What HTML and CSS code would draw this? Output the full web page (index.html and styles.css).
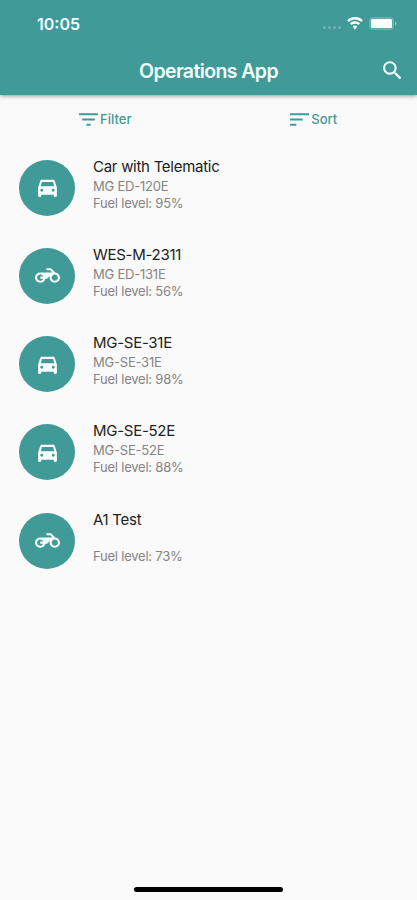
FILE: index.html
```
<!DOCTYPE html>
<html lang="en">
<head>
  <meta charset="UTF-8" />
  <meta name="viewport" content="width=device-width, initial-scale=1.0" />
  <title>Operations App</title>
  <link rel="stylesheet" href="styles.css">
</head>
<body>
  <!-- Icons used by the list -->
  <svg class="sprite">
    <symbol id="car" viewBox="0 0 24 24">
      <path d="M18.92 5.500C18.720 4.900 18.160 4.500 17.500 4.500h-11c-.66 0-1.210.4-1.420 1L3 12v8c0 .55.45 1 1 1h1c.55 0 1-.45 1-1v-1h12v1c0 .55.45 1 1 1h1c.55 0 1-.45 1-1v-8l-2.080-6.500zM6.500 16c-.83 0-1.400-.6-1.400-1.400s.6-1.400 1.400-1.400 1.400.6 1.400 1.400S7.300 16 6.500 16zm11 0c-.83 0-1.400-.6-1.400-1.400s.6-1.400 1.400-1.400 1.400.6 1.400 1.400-.6 1.400-1.400 1.400zM5.500 10.800L6.700 6.700h10.600l1.200 4.100H5.500z"/>
    </symbol>
    <symbol id="motorcycle" viewBox="0 0 24 24">
      <path d="M19.44 9.03L15.41 5H11v2h3.59l2 2H5c-2.8 0-5 2.2-5 5s2.2 5 5 5c2.46 0 4.45-1.69 4.9-4h1.65l2.77-2.77c-.21.54-.32 1.14-.32 1.77 0 2.8 2.2 5 5 5s5-2.2 5-5c0-2.65-1.97-4.77-4.56-4.97zM7.82 15C7.4 16.15 6.28 17 5 17c-1.63 0-3-1.37-3-3s1.37-3 3-3c1.28 0 2.4.85 2.82 2H5v2h2.82zM19 17c-1.66 0-3-1.34-3-3s1.34-3 3-3 3 1.34 3 3-1.34 3-3 3z"/>
    </symbol>
  </svg>

  <header class="header">
    <div class="status-bar">
      <span class="time">10:05</span>
      <div class="status-icons">
        <div class="signal"><i></i><i></i><i></i><i></i></div>
        <svg class="wifi" viewBox="0 0 16 12">
          <path d="M8 2.3c2.2 0 4.2.9 5.7 2.3l1.6-1.7C13.4 1.1 10.8 0 8 0S2.6 1.1.7 2.9l1.6 1.7C3.8 3.2 5.8 2.3 8 2.3z"/>
          <path d="M8 6.2c1.2 0 2.3.4 3.1 1.2l1.6-1.7C11.5 4.6 9.8 3.9 8 3.9s-3.5.7-4.7 1.8l1.6 1.7C5.7 6.6 6.8 6.2 8 6.2z"/>
          <path d="M8 7.800c-.8 0-1.500.3-2.100.8L8 11.700l2.100-3.100C9.500 8.100 8.800 7.800 8 7.800z"/>
        </svg>
        <svg class="battery" viewBox="0 0 28 13">
          <rect class="battery-case" x=".5" y=".5" width="24" height="12" rx="3"/>
          <rect x="2" y="2" width="21" height="9" rx="1.500"/>
          <path class="battery-tip" d="M26 4.500v4c1-.3 1.500-1.100 1.500-2s-.5-1.700-1.500-2z"/>
        </svg>
      </div>
    </div>
    <div class="app-bar">
      <h1 class="title">Operations App</h1>
      <svg class="search" viewBox="0 0 24 24">
        <path d="M15.5 14h-.79l-.28-.27C15.41 12.59 16 11.11 16 9.5 16 5.91 13.09 3 9.5 3S3 5.91 3 9.5 5.91 16 9.5 16c1.61 0 3.09-.59 4.23-1.57l.27.28v.79l5 4.99L20.49 19l-4.99-5zm-6 0C7.01 14 5 11.99 5 9.5S7.01 5 9.5 5 14 7.01 14 9.5 11.99 14 9.5 14z"/>
      </svg>
    </div>
  </header>

  <div class="toolbar">
    <div class="tool">
      <svg class="tool-icon" viewBox="0 0 18 12"><path d="M7 12h4v-2H7v2zM0 0v2h18V0H0zm3 7h12V5H3v2z"/></svg>
      <span>Filter</span>
    </div>
    <div class="tool">
      <svg class="tool-icon" viewBox="0 0 18 12"><path d="M0 12h6v-2H0v2zM0 0v2h18V0H0zm0 7h12V5H0v2z"/></svg>
      <span>Sort</span>
    </div>
  </div>

  <main class="list">
    <div class="item">
      <div class="avatar"><svg><use href="#car"/></svg></div>
      <div class="info">
        <div class="name">Car with Telematic</div>
        <div class="detail">MG ED-120E</div>
        <div class="detail">Fuel level: 95%</div>
      </div>
    </div>
    <div class="item">
      <div class="avatar"><svg><use href="#motorcycle"/></svg></div>
      <div class="info">
        <div class="name">WES-M-2311</div>
        <div class="detail">MG ED-131E</div>
        <div class="detail">Fuel level: 56%</div>
      </div>
    </div>
    <div class="item">
      <div class="avatar"><svg><use href="#car"/></svg></div>
      <div class="info">
        <div class="name">MG-SE-31E</div>
        <div class="detail">MG-SE-31E</div>
        <div class="detail">Fuel level: 98%</div>
      </div>
    </div>
    <div class="item">
      <div class="avatar"><svg><use href="#car"/></svg></div>
      <div class="info">
        <div class="name">MG-SE-52E</div>
        <div class="detail">MG-SE-52E</div>
        <div class="detail">Fuel level: 88%</div>
      </div>
    </div>
    <div class="item">
      <div class="avatar"><svg><use href="#motorcycle"/></svg></div>
      <div class="info">
        <div class="name">A1 Test</div>
        <div class="detail"></div>
        <div class="detail">Fuel level: 73%</div>
      </div>
    </div>
  </main>

  <div class="home-indicator"></div>
</body>
</html>
```
FILE: styles.css
```
* {
  box-sizing: border-box;
}
body {
  margin: 0;
  height: 100vh;
  display: flex;
  flex-direction: column;
  background: #fafafa;
  font-family: Inter, Roboto, sans-serif;
  overflow: hidden;
}
.sprite {
  display: none;
}
.header {
  height: 95px;
  flex: none;
  background: #409a98;
  color: #f2ffff;
  box-shadow: 0 1px 4px rgba(0, 0, 0, 0.4);
}
.status-bar {
  height: 47px;
  padding: 0 20px 0 37px;
  display: flex;
  align-items: center;
  justify-content: space-between;
}
.time {
  font-size: 16px;
  font-weight: 600;
}
.status-icons {
  display: flex;
  align-items: center;
}
.status-icons svg {
  fill: #fff;
}
.signal {
  display: flex;
  gap: 2px;
  margin: 7px 5px 0 0;
}
.signal i {
  width: 3px;
  height: 3px;
  border-radius: 50%;
  background: rgba(255, 255, 255, 0.25);
}
.wifi {
  width: 18px;
  height: 13px;
  margin-right: 5px;
}
.battery {
  width: 28px;
  height: 13px;
}
.status-icons .battery-case {
  fill: rgba(255, 255, 255, 0.15);
  stroke: rgba(255, 255, 255, 0.2);
}
.battery-tip {
  opacity: 0.4;
}
.app-bar {
  height: 48px;
  position: relative;
  display: flex;
  align-items: center;
  justify-content: center;
}
.title {
  margin: 0;
  font-size: 19.5px;
  font-weight: 600;
  letter-spacing: -0.6px;
}
.search {
  position: absolute;
  right: 12px;
  top: 11px;
  width: 25px;
  height: 25px;
  fill: #f2ffff;
}
.toolbar {
  height: 48px;
  flex: none;
  display: flex;
  color: #409a98;
  font-size: 13px;
  font-weight: 500;
}
.tool {
  flex: 1;
  display: flex;
  align-items: center;
  justify-content: center;
  gap: 2px;
  padding-left: 2px;
}
.tool-icon {
  width: 19px;
  height: 13px;
  fill: #409a98;
}
.list {
  flex: 1;
  padding-top: 16.5px;
}
.item {
  height: 88.3px;
  padding-left: 19px;
  display: flex;
  gap: 18px;
}
.avatar {
  width: 56px;
  height: 56px;
  flex: none;
  border-radius: 50%;
  background: #409a98;
  display: flex;
  align-items: center;
  justify-content: center;
}
.avatar svg {
  width: 25px;
  height: 25px;
  fill: #f7ffff;
}
.info {
  margin-top: -4px;
}
.name {
  height: 22px;
  line-height: 21px;
  font-size: 15px;
  letter-spacing: -0.28px;
  color: #222;
}
.detail {
  height: 17px;
  line-height: 17px;
  font-size: 13px;
  letter-spacing: -0.22px;
  color: #858585;
}
.home-indicator {
  width: 149px;
  height: 5px;
  margin: 0 auto 8px;
  flex: none;
  border-radius: 3px;
  background: #000;
}
```
